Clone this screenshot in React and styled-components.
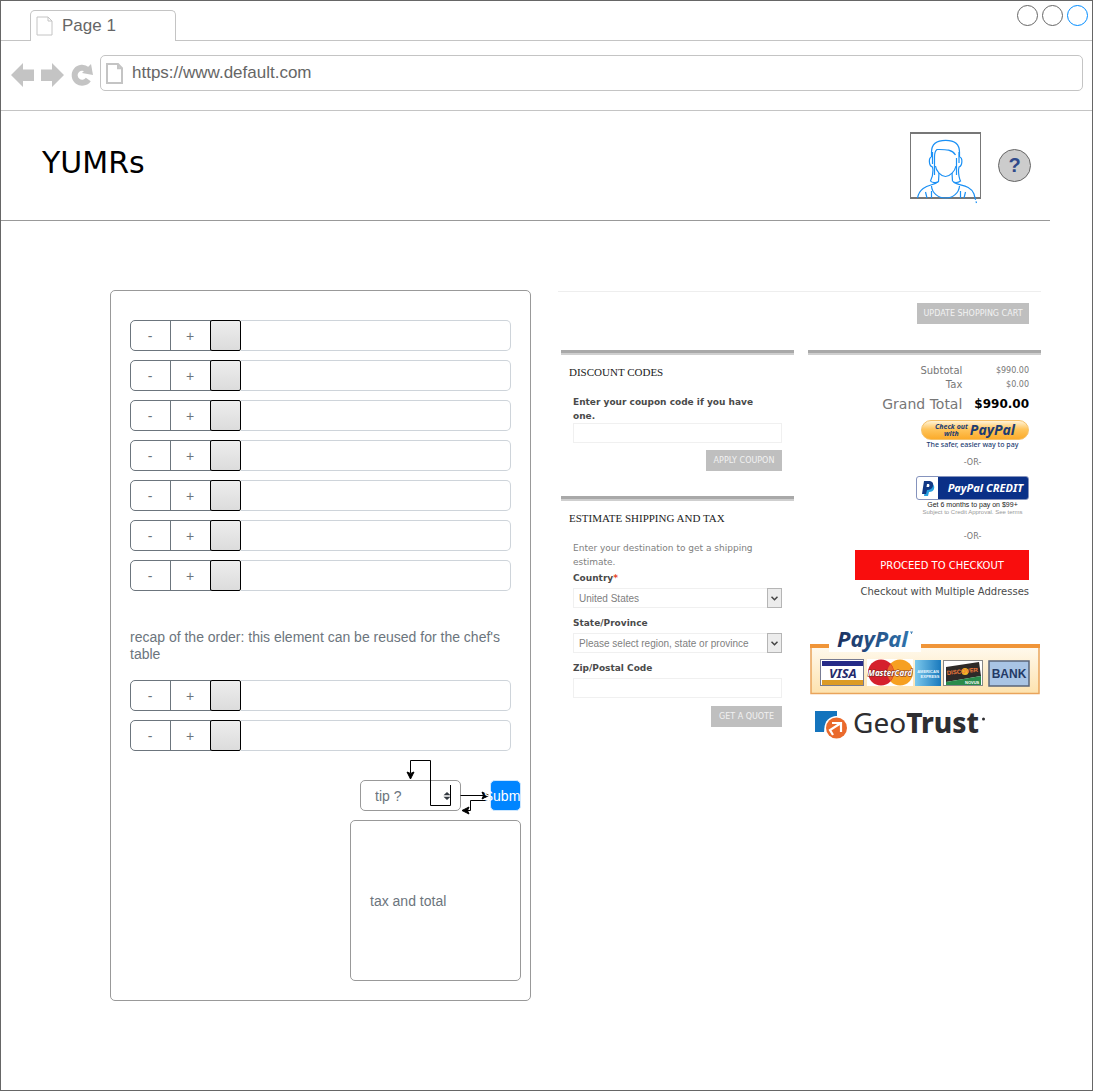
import React from "react";
import styled, { createGlobalStyle, css } from "styled-components";

const sans = `"Liberation Sans", Arial, sans-serif`;
const verdana = `"DejaVu Sans", Verdana, sans-serif`;
const humanist = `"Noto Sans", "Open Sans", sans-serif`;
const serif = `"Liberation Serif", "Times New Roman", serif`;

const GlobalStyle = createGlobalStyle`
  *, *::before, *::after { box-sizing: border-box; }
  body { margin: 0; background: #fff; font-family: ${sans}; }
  button, input, select { font-family: inherit; margin: 0; }
`;

/* ---------- browser window ---------- */

const Window = styled.div`
  min-height: 100vh;
  margin-right: 1px;
  border: 1px solid #666;
  background: #fff;
`;

const TabBar = styled.div`
  display: flex;
  justify-content: space-between;
  height: 40px;
  padding: 4px 4px 0 29px;
  border-bottom: 1px solid #c4c4c4;
`;

const Tab = styled.button`
  display: flex;
  align-items: center;
  gap: 9px;
  width: 146px;
  height: 31px;
  margin-top: 5px;
  padding: 0 5px;
  border: 1px solid #c4c4c4;
  border-bottom: none;
  border-radius: 5px 5px 0 0;
  background: #fff;
  color: #666;
  font-size: 17px;
`;

const WindowControls = styled.div`
  display: flex;
  gap: 4px;
`;

const Dot = styled.button`
  width: 21px;
  height: 21px;
  padding: 0;
  border: 1px solid ${(p) => (p.$active ? "#008cff" : "#666")};
  border-radius: 50%;
  background: #fff;
`;

const Toolbar = styled.div`
  display: flex;
  align-items: center;
  gap: 7px;
  height: 70px;
  padding: 0 9px 5px 10px;
  border-bottom: 1px solid #c4c4c4;
`;

const NavButton = styled.button`
  display: flex;
  padding: 3px 0 0;
  border: none;
  background: none;
`;

const AddressBar = styled.label`
  display: flex;
  flex: 1;
  align-items: center;
  gap: 9px;
  height: 36px;
  padding: 0 5px;
  border: 1px solid #c4c4c4;
  border-radius: 5px;
`;

const AddressInput = styled.input`
  flex: 1;
  min-width: 0;
  padding: 0;
  border: none;
  outline: none;
  background: none;
  color: #666;
  font-size: 17px;
`;

/* ---------- page header ---------- */

const Header = styled.header`
  display: flex;
  align-items: center;
  gap: 17px;
  height: 110px;
  margin-right: 42px;
  padding: 0 19px 0 41px;
  border-bottom: 1px solid #999;
`;

const Brand = styled.h1`
  flex: 1;
  margin: 0;
  padding-bottom: 6px;
  font: 400 30px/36px ${verdana};
  color: #000;
`;

const Avatar = styled.div`
  width: 71px;
  height: 67px;
  border: 1px solid #777;
  border-width: 2px 1px;
  svg { display: block; margin: -2px -1px; overflow: visible; }
`;

const Help = styled.button`
  width: 33px;
  height: 33px;
  padding: 0;
  border: 1px solid #666;
  border-radius: 50%;
  background: #ccc;
  color: #2f4a8a;
  font-size: 20px;
  font-weight: 700;
`;

/* ---------- order panel ---------- */

const Main = styled.main`
  display: grid;
  grid-template-columns: minmax(0, 421fr) minmax(0, 483fr);
  gap: 27px;
  align-items: start;
  padding: 69px 51px 89px 109px;
`;

const Panel = styled.section`
  padding: 29px 9px 19px 19px;
  border: 1px solid #999;
  border-radius: 5px;
`;

const Rows = styled.div`
  display: flex;
  flex-direction: column;
  gap: 9px;
  margin-right: 10px;
`;

const Row = styled.div`
  display: flex;
  height: 31px;
`;

const StepButton = styled.button`
  width: 41px;
  margin-right: -1px;
  padding: 0 1px 0 0;
  border: 1px solid #6c757d;
  border-radius: ${(p) => (p.$first ? "5px 0 0 5px" : "0")};
  background: #fff;
  color: #6c757d;
  font-size: 14px;
`;

const Swatch = styled.button`
  width: 31px;
  padding: 0;
  border: 1px solid #000;
  border-radius: 2px;
  background: linear-gradient(#ededed, #dcdcdc);
`;

const ItemInput = styled.input`
  flex: 1;
  min-width: 0;
  padding: 0 10px;
  border: 1px solid #ced4da;
  border-left: none;
  border-radius: 0 5px 5px 0;
  font-size: 14px;
`;

const Recap = styled.p`
  margin: 38px 10px 17px 0;
  color: #6c757d;
  font-size: 14px;
  line-height: 17px;
`;

const TipRow = styled.div`
  position: relative;
  display: flex;
  justify-content: flex-end;
  gap: 29px;
  margin-top: 29px;
`;

const TipBox = styled.div`
  display: grid;
  width: 101px;
  height: 31px;
  > * { grid-area: 1 / 1; }
  svg { place-self: center end; margin-right: 10px; pointer-events: none; }
`;

const TipSelect = styled.select`
  appearance: none;
  padding: 0 14px;
  border: 1px solid #999;
  border-radius: 5px;
  background: #fff;
  color: #6c757d;
  font-size: 14px;
`;

const Connectors = styled.svg`
  position: absolute;
  top: -25px;
  right: 21px;
  pointer-events: none;
`;

const Submit = styled.button`
  position: relative;
  display: flex;
  align-items: center;
  justify-content: center;
  width: 31px;
  height: 31px;
  padding: 0;
  border: 1px solid #cce7ff;
  border-radius: 5px;
  background: #0085ff;
  color: #fff;
  font-size: 14px;
`;

const TotalBox = styled.div`
  display: flex;
  align-items: center;
  width: 171px;
  height: 161px;
  margin: 9px 0 0 auto;
  padding: 0 19px;
  border: 1px solid #999;
  border-radius: 5px;
  color: #6c757d;
  font-size: 14px;
`;

/* ---------- cart panel ---------- */

const Cart = styled.section`
  display: flex;
  flex-direction: column;
  gap: 26px;
  padding-top: 11px;
  border-top: 1px solid #eee;
  margin-top: 1px;
  font-family: ${verdana};
  color: #777;
`;

const CartActions = styled.div`
  display: flex;
  justify-content: flex-end;
  padding-right: 12px;
`;

const GreyButton = styled.button`
  align-self: flex-end;
  width: ${(p) => p.$width}px;
  height: 21px;
  padding: 0;
  border: none;
  background: #bfbfbf;
  color: #f2f2f2;
  font-size: 8px;
  white-space: nowrap;
`;

const CartColumns = styled.div`
  display: grid;
  grid-template-columns: 1fr 1fr;
  gap: 14px;
  padding-left: 3px;
`;

const CartColumn = styled.div`
  display: flex;
  flex-direction: column;
  gap: 25px;
`;

const bar = css`
  border-top: 3px solid #a9a9a9;
  box-shadow: inset 0 2px #cfcfcf;
`;

const CartSection = styled.form`
  ${bar}
  display: flex;
  flex-direction: column;
  padding: 12px 12px 0;
`;

const SectionTitle = styled.h2`
  margin: 0 0 16px -4px;
  font: 400 11px/14px ${serif};
  color: #222;
`;

const Note = styled.p`
  margin: 0 0 2px;
  font-size: 9px;
  line-height: 14px;
  color: #808080;
`;

const Field = styled.div`
  display: flex;
  flex-direction: column;
  gap: ${(p) => (p.$tight ? 0 : 3)}px;
  margin-bottom: ${(p) => (p.$tight ? 7 : 8)}px;
`;

const FieldLabel = styled.label`
  padding-right: 16px;
  font-size: 9px;
  font-weight: 700;
  line-height: 14px;
  color: #4a4a4a;
`;

const Required = styled.span`
  color: #e8472b;
`;

const fieldBox = css`
  width: 100%;
  height: 20px;
  border: 1px solid #f0f0f0;
  border-radius: 0;
  background: #fff;
  color: #808080;
  font: 10px ${sans};
`;

const FieldInput = styled.input`
  ${fieldBox}
  padding: 0 6px;
`;

const SelectBox = styled.div`
  display: grid;
  > * { grid-area: 1 / 1; }
`;

const FieldSelect = styled.select`
  ${fieldBox}
  appearance: none;
  padding: 0 16px 0 5px;
`;

const SelectArrow = styled.span`
  display: grid;
  place-items: center;
  justify-self: end;
  width: 15px;
  height: 20px;
  border: 1px solid #b5b5b5;
  background: #ececec;
  pointer-events: none;
`;

const Checkout = styled.div`
  ${bar}
  display: flex;
  flex-direction: column;
  align-items: flex-end;
  padding: 11px 12px 0;
`;

const Totals = styled.table`
  border-collapse: collapse;
  text-align: right;
  line-height: 14px;
  th, td { padding: 0; font-weight: 400; }
  th { padding-right: 12px; font-size: 10px; }
  td { font-size: 8px; }
  tfoot tr { height: 24px; }
  tfoot th { font-size: 14px; }
  tfoot td { font-size: 12px; font-weight: 700; color: #000; }
`;

const PayBlock = styled.div`
  display: flex;
  flex-direction: column;
  align-items: center;
  width: 113px;
  margin-top: 4px;
`;

const PayPalButton = styled.button`
  display: flex;
  align-items: center;
  justify-content: center;
  gap: 2px;
  align-self: flex-end;
  width: 108px;
  height: 20px;
  padding: 0;
  border: 1px solid #f5c26b;
  border-radius: 10px;
  background: linear-gradient(#fff3d8, #ffc55c 45%, #fbab2b);
  color: #1c3c72;
  font: italic 700 7px/7px ${humanist};
`;

const PayPalWord = styled.span`
  font-size: 14px;
  line-height: 16px;
`;

const Tagline = styled.p`
  margin: 0;
  white-space: nowrap;
  font: ${(p) => p.$weight || 400} ${(p) => p.$size}px/${(p) => p.$line}px ${(p) => p.$family};
  color: ${(p) => p.$color};
`;

const Or = styled.span`
  margin: ${(p) => (p.$second ? "15px 0 7px" : "7px 0")};
  font-size: 8px;
  line-height: 12px;
`;

const CreditButton = styled.button`
  display: flex;
  align-items: center;
  justify-content: space-between;
  width: 113px;
  height: 24px;
  padding: 0 5px;
  border: 1px solid #8593bd;
  border-radius: 3px;
  background: linear-gradient(90deg, #fff 21px, #0a3087 21px);
  color: #fff;
  font: italic 700 11px/20px ${humanist};
`;

const ProceedButton = styled.button`
  width: 174px;
  height: 30px;
  padding: 0;
  border: none;
  background: #f90d0d;
  color: #fff;
  font: 10px ${verdana};
`;

const MultiLink = styled.a`
  margin-top: 5px;
  font-size: 10px;
  line-height: 14px;
  color: #4a4a4a;
  text-decoration: none;
  white-space: nowrap;
`;

const Badges = styled.div`
  display: flex;
  flex-direction: column;
  gap: 14px;
  padding-left: 2px;
  svg { display: block; overflow: visible; }
`;

/* ---------- drawings ---------- */

const PageIcon = ({ width, height, stroke }) => (
  <svg width={width} height={height} viewBox="0 0 17 20" preserveAspectRatio="none" fill="none" stroke="#c4c4c4" strokeWidth={stroke}>
    <path d="M1 1H12L16 5V19H1Z M12 1V5H16" />
  </svg>
);

const BackIcon = () => (
  <svg width="23" height="24" viewBox="0 0 23 24" fill="#c4c4c4">
    <path d="M0 12L12 0V6.500H23V18H12V24Z" />
  </svg>
);

const ForwardIcon = () => (
  <svg width="23" height="24" viewBox="0 0 23 24" fill="#c4c4c4">
    <path d="M23 12L11 0V6.500H0V18H11V24Z" />
  </svg>
);

const ReloadIcon = () => (
  <svg width="22" height="24" viewBox="0 0 22 24">
    <path d="M17.300 16.500A7.500 7.500 0 1 1 16 6.500" fill="none" stroke="#c4c4c4" strokeWidth="6" />
    <path d="M20 1L22 12L11 10Z" fill="#c4c4c4" />
  </svg>
);

const Person = () => (
  <svg width="71" height="75" viewBox="0 0 71 75" fill="none" stroke="#1a90f5" strokeWidth="1.2">
    <path d="M21.500 25V20C21.500 12 27 8.300 35.700 8.300S49.500 12 49.500 20V25" />
    <path d="M24.500 43V25C24.500 21 25 19 27 17.500C35 17.500 42 17 45.500 23" />
    <path d="M21.500 25C18.500 25 18.500 34 22.500 35L23 38C23 43 22 46 20.500 49C22 51 27 51 28.500 49.500L29 41" />
    <path d="M49.500 25C53 25 52.500 34 49 35L48.500 38C48.500 43 49 46 50.500 49C48 51 44 51 42.500 49L42 41" />
    <path d="M22.500 20V32 M49 20V31 M46.500 26V43" />
    <path d="M25.500 34C26 39 31 44.500 35.500 44.500S45 39 46 34" />
    <path d="M27.500 50C24 54 10 52 7.500 66 M43.500 50C48 54 60 52 64 62L65 66" />
    <path d="M65 66L66.500 71" strokeDasharray="2 1.500" />
    <path d="M21.500 54C22 61 28 66 35.500 66S49 61 49.500 54" />
    <path d="M15.500 60L17 66 M21.500 59V66 M55.500 60L54 66 M50.500 59V66" />
  </svg>
);

const UpDown = () => (
  <svg width="8" height="10" viewBox="0 0 8 10" fill="#343a40">
    <path d="M4 1L7.500 4.300H.5Z M4 9L.5 5.700H7.500Z" />
  </svg>
);

const Chevron = () => (
  <svg width="7" height="5" viewBox="0 0 7 5" fill="none" stroke="#444" strokeWidth="1.500">
    <path d="M.5 .8L3.500 3.800L6.500 .8" />
  </svg>
);

const PayPalMark = () => (
  <svg width="13" height="15" viewBox="0 0 13 15">
    <path d="M4 3H10Q13 4 12 8Q11 11 7 11L6 15H2Z" fill="#26a0e0" />
    <path d="M2 0H8Q12 1 11 5Q10 9 5 9L4 13H0Z" fill="#123985" />
    <path d="M5 3H7Q8 4 7 6H4.500Z" fill="#fff" />
  </svg>
);

const CardBadge = () => (
  <svg width="231" height="72" viewBox="0 0 231 72">
    <defs>
      <linearGradient id="cream" x1="0" y1="0" x2="0" y2="1">
        <stop offset="0" stopColor="#fffaf0" />
        <stop offset="1" stopColor="#fde2ae" />
      </linearGradient>
      <linearGradient id="navy" x1="0" x2="1">
        <stop offset="0" stopColor="#1b2f5e" />
        <stop offset="1" stopColor="#2f74ae" />
      </linearGradient>
      <linearGradient id="amex" x1="0" x2="1">
        <stop offset="0" stopColor="#7cc8ec" />
        <stop offset="1" stopColor="#1979bd" />
      </linearGradient>
    </defs>
    <rect x="1" y="21" width="228" height="48.500" fill="url(#cream)" stroke="#e9a45b" strokeWidth="1.500" />
    <path d="M0 22H230" stroke="#f09538" strokeWidth="4" />
    <path d="M19 14H111V28H19Z" fill="#fff" />
    <text x="27" y="23" fontFamily={humanist} fontSize="22" fontWeight="700" fontStyle="italic" fill="url(#navy)">PayPal</text>
    <path d="M100 8H103M101.500 8V10" stroke="#2f74ae" strokeWidth=".8" />

    <rect x="10.500" y="35.500" width="43" height="26" fill="#fff" stroke="#777b92" />
    <path d="M12 37H53V42H12Z" fill="#252a87" />
    <path d="M12 56H53V61H12Z" fill="#dc9b25" />
    <text x="19" y="54" fontFamily={humanist} fontSize="13" fontWeight="700" fontStyle="italic" fill="#252a6c">VISA</text>

    <rect x="57" y="35" width="46" height="27" fill="#fff" />
    <circle cx="90" cy="48.500" r="13" fill="#f6a021" />
    <circle cx="71" cy="48.500" r="13" fill="#d5202c" />
    <path d="M80.500 40A13 13 0 0 1 80.500 57A13 13 0 0 1 80.500 40Z" fill="#e96a29" />
    <text x="80" y="51.500" textAnchor="middle" fontFamily={humanist} fontSize="8" fontWeight="700" fontStyle="italic" fill="#fff" stroke="#7a2a20" strokeWidth="1" paintOrder="stroke">MasterCard</text>

    <rect x="105" y="36" width="26" height="26" fill="url(#amex)" />
    <text x="118" y="49" textAnchor="middle" fontFamily={sans} fontSize="4" fontWeight="700" fill="#eaf7ff">AMERICAN</text>
    <text x="120" y="54" textAnchor="middle" fontFamily={sans} fontSize="4" fontWeight="700" fill="#eaf7ff">EXPRESS</text>

    <rect x="133.500" y="36.500" width="39" height="25" fill="#fff" stroke="#888" />
    <path d="M136 43L169 38L171 52L136 58Z" fill="#2e2a28" />
    <path d="M136 58L171 52V61H136Z" fill="#2a8b4b" />
    <circle cx="155" cy="47.500" r="3.500" fill="#f3b525" />
    <text x="137" y="51" transform="rotate(-6 137 51)" fontFamily={sans} fontSize="6" fontWeight="700" fill="#ee7a3c">DISCOVER</text>
    <text x="155" y="60" fontFamily={sans} fontSize="4" fontWeight="700" fill="#fff">NOVUS</text>

    <rect x="179" y="37" width="40" height="25" fill="#a9c4e4" stroke="#5a6478" strokeWidth="1.500" />
    <text x="199" y="54" textAnchor="middle" fontFamily={sans} fontSize="12" fontWeight="700" fill="#243a66">BANK</text>
  </svg>
);

const GeoTrust = () => (
  <svg width="180" height="32" viewBox="0 0 180 32">
    <path d="M5 1H27V6C19 8 15 13 14 22H5Z" fill="#1474bd" />
    <circle cx="26.500" cy="18" r="12" fill="#fff" />
    <circle cx="26.500" cy="18" r="10.500" fill="#ea6a2c" />
    <path d="M22 13H31V22M31 13L20 20L23 25" fill="none" stroke="#fff" strokeWidth="2.200" />
    <text x="43" y="23" fontFamily={humanist} fontSize="28" fill="#2e2e31">
      Geo<tspan fontWeight="800">Trust</tspan>
    </text>
    <circle cx="173.500" cy="9" r="1.500" fill="#2e2e31" />
  </svg>
);

/* ---------- components ---------- */

function OrderRow({ label }) {
  return (
    <Row>
      <StepButton $first aria-label={`Remove one, ${label}`}>-</StepButton>
      <StepButton aria-label={`Add one, ${label}`}>+</StepButton>
      <Swatch aria-label={`Picture, ${label}`} />
      <ItemInput aria-label={label} />
    </Row>
  );
}

function OrderRows({ count, name }) {
  return (
    <Rows>
      {Array.from({ length: count }, (_, i) => (
        <OrderRow key={i} label={`${name} ${i + 1}`} />
      ))}
    </Rows>
  );
}

function SelectField({ id, label, required, option }) {
  return (
    <Field>
      <FieldLabel htmlFor={id}>
        {label}
        {required && <Required>*</Required>}
      </FieldLabel>
      <SelectBox>
        <FieldSelect id={id}>
          <option>{option}</option>
        </FieldSelect>
        <SelectArrow>
          <Chevron />
        </SelectArrow>
      </SelectBox>
    </Field>
  );
}

export default function App() {
  return (
    <>
      <GlobalStyle />
      <Window>
        <TabBar>
          <Tab>
            <PageIcon width={17} height={20} stroke={1} />
            Page 1
          </Tab>
          <WindowControls>
            <Dot aria-label="Minimize" />
            <Dot aria-label="Maximize" />
            <Dot aria-label="Close" $active />
          </WindowControls>
        </TabBar>
        <Toolbar>
          <NavButton aria-label="Back"><BackIcon /></NavButton>
          <NavButton aria-label="Forward"><ForwardIcon /></NavButton>
          <NavButton aria-label="Reload"><ReloadIcon /></NavButton>
          <AddressBar>
            <PageIcon width={17} height={21} stroke={2} />
            <AddressInput aria-label="Address" defaultValue="https://www.default.com" />
          </AddressBar>
        </Toolbar>

        <Header>
          <Brand>YUMRs</Brand>
          <Avatar><Person /></Avatar>
          <Help aria-label="Help">?</Help>
        </Header>

        <Main>
          <Panel>
            <OrderRows count={7} name="Item" />
            <Recap>recap of the order: this element can be reused for the chef's table</Recap>
            <OrderRows count={2} name="Recap item" />
            <TipRow>
              <TipBox>
                <TipSelect aria-label="Tip">
                  <option>tip ?</option>
                </TipSelect>
                <UpDown />
              </TipBox>
              <Connectors width="100" height="65" viewBox="0 0 100 65" fill="none" stroke="#000">
                <path d="M50.500 30V50.500H30.500V5.500H10.500V18 M60.500 40.500H84 M90 45.500H70.500V55.500H67" />
                <path d="M10.500 24L7 17L10.500 18.500L14 17Z M89 40.500L82 37L83.500 40.500L82 44Z M62 55.500L69 52L67.500 55.500L69 59Z" fill="#000" />
              </Connectors>
              <Submit>Submit</Submit>
            </TipRow>
            <TotalBox>tax and total</TotalBox>
          </Panel>

          <Cart>
            <CartActions>
              <GreyButton $width={112}>UPDATE SHOPPING CART</GreyButton>
            </CartActions>
            <CartColumns>
              <CartColumn>
                <CartSection>
                  <SectionTitle>DISCOUNT CODES</SectionTitle>
                  <Field $tight>
                    <FieldLabel htmlFor="coupon">Enter your coupon code if you have one.</FieldLabel>
                    <FieldInput id="coupon" />
                  </Field>
                  <GreyButton type="button" $width={76}>APPLY COUPON</GreyButton>
                </CartSection>
                <CartSection>
                  <SectionTitle>ESTIMATE SHIPPING AND TAX</SectionTitle>
                  <Note>Enter your destination to get a shipping estimate.</Note>
                  <SelectField id="country" label="Country" required option="United States" />
                  <SelectField id="state" label="State/Province" option="Please select region, state or province" />
                  <Field>
                    <FieldLabel htmlFor="zip">Zip/Postal Code</FieldLabel>
                    <FieldInput id="zip" />
                  </Field>
                  <GreyButton type="button" $width={71}>GET A QUOTE</GreyButton>
                </CartSection>
              </CartColumn>

              <CartColumn>
                <Checkout>
                  <Totals>
                    <tbody>
                      <tr><th scope="row">Subtotal</th><td>$990.00</td></tr>
                      <tr><th scope="row">Tax</th><td>$0.00</td></tr>
                    </tbody>
                    <tfoot>
                      <tr><th scope="row">Grand Total</th><td>$990.00</td></tr>
                    </tfoot>
                  </Totals>
                  <PayBlock>
                    <PayPalButton>
                      <span>Check out<br />with</span>
                      <PayPalWord>PayPal</PayPalWord>
                    </PayPalButton>
                    <Tagline $size={7} $line={10} $color="#1c3c72" $family={humanist} $weight={500}>The safer, easier way to pay</Tagline>
                    <Or>-OR-</Or>
                    <CreditButton>
                      <PayPalMark />
                      PayPal CREDIT
                    </CreditButton>
                    <Tagline $size={7} $line={9} $color="#222" $family={sans}>Get 6 months to pay on $99+</Tagline>
                    <Tagline $size={6} $line={7} $color="#999" $family={sans}>Subject to Credit Approval. See terms</Tagline>
                    <Or $second>-OR-</Or>
                  </PayBlock>
                  <ProceedButton>PROCEED TO CHECKOUT</ProceedButton>
                  <MultiLink href="#addresses">Checkout with Multiple Addresses</MultiLink>
                </Checkout>
                <Badges>
                  <CardBadge />
                  <GeoTrust />
                </Badges>
              </CartColumn>
            </CartColumns>
          </Cart>
        </Main>
      </Window>
    </>
  );
}
